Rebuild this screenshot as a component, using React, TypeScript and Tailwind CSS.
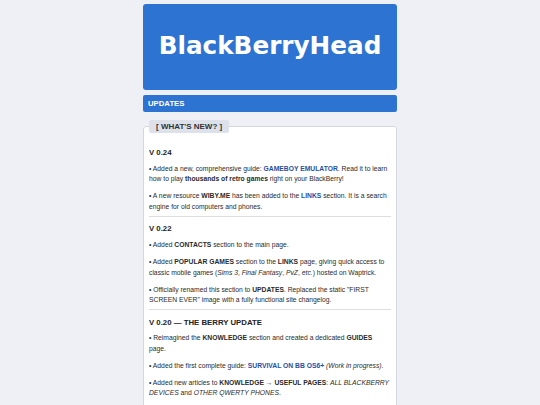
import React from 'react';

const Link: React.FC<{ children: React.ReactNode }> = ({ children }) => (
  <a href="#" className="font-bold text-[#1f4fa3]">
    {children}
  </a>
);

const Section: React.FC<{ title: string; first?: boolean; last?: boolean; children: React.ReactNode }> = ({
  title,
  first,
  last,
  children,
}) => (
  <div className={(first ? '' : 'border-t border-[#dedede] pt-[6.5px] ') + (last ? '' : 'pb-[3.5px]')}>
    <h3 className="text-[7.8px] leading-[11px] font-bold text-[#222] mb-[5.75px]">{title}</h3>
    <div className="flex flex-col gap-[6.5px]">{children}</div>
  </div>
);

const App: React.FC = () => {
  return (
    <div className="min-h-screen bg-[#eef0f5] pt-[4px] font-['Liberation_Sans',Arial,sans-serif]">
      <div className="w-[254px] mx-auto flex flex-col">
        <div className="h-[86px] rounded-[3px] bg-[#2d74d2] flex items-center justify-center">
          <h1 className="font-['DejaVu_Sans',sans-serif] font-bold text-[24.7px] text-white leading-none mt-[-1px]">
            BlackBerryHead
          </h1>
        </div>
        <div className="mt-[5px] h-[17px] rounded-[2px] bg-[#2d74d2] flex items-center px-[5px]">
          <span className="text-[7.75px] font-bold text-white leading-none">UPDATES</span>
        </div>
        <fieldset className="mt-[8px] border border-[#d3d8e0] rounded-[3px] bg-white px-[5px] pt-[14px] pb-[20px]">
          <legend className="ml-0 bg-[#dde2ea] rounded-[2px] px-[7px] h-[13px] flex items-center text-[8px] font-bold text-[#333] leading-none">
            [ WHAT'S NEW? ]
          </legend>
          <div className="text-[6.75px] leading-[10.5px] text-[#2a2a2a]">
            <Section title="V 0.24" first>
              <p>
                • Added a new, comprehensive guide: <Link>GAMEBOY EMULATOR</Link>. Read it to learn how to play{' '}
                <b>thousands of retro games</b> right on your BlackBerry!
              </p>
              <p>
                • A new resource <b>WIBY.ME</b> has been added to the <Link>LINKS</Link> section. It is a search engine
                for old computers and phones.
              </p>
            </Section>
            <Section title="V 0.22">
              <p>
                • Added <b>CONTACTS</b> section to the main page.
              </p>
              <p>
                • Added <b>POPULAR GAMES</b> section to the <b>LINKS</b> page, giving quick access to classic mobile
                games (<i>Sims 3</i>, <i>Final Fantasy</i>, <i>PvZ</i>, <i>etc.</i>) hosted on Waptrick.
              </p>
              <p>
                • Officially renamed this section to <b>UPDATES</b>. Replaced the static "FIRST SCREEN EVER" image with a
                fully functional site changelog.
              </p>
            </Section>
            <Section title="V 0.20 — THE BERRY UPDATE" last>
              <p>
                • Reimagined the <b>KNOWLEDGE</b> section and created a dedicated <b>GUIDES</b> page.
              </p>
              <p>
                • Added the first complete guide: <Link>SURVIVAL ON BB OS6+</Link> <i>(Work in progress)</i>.
              </p>
              <p>
                • Added new articles to <b>KNOWLEDGE → USEFUL PAGES</b>: <i>ALL BLACKBERRY DEVICES</i> and{' '}
                <i>OTHER QWERTY PHONES</i>.
              </p>
              <p>
                • Added a placeholder page for the upcoming <i>BLACKBERRY PLAYBOOK</i> section.
              </p>
            </Section>
          </div>
        </fieldset>
      </div>
    </div>
  );
};

export default App;
